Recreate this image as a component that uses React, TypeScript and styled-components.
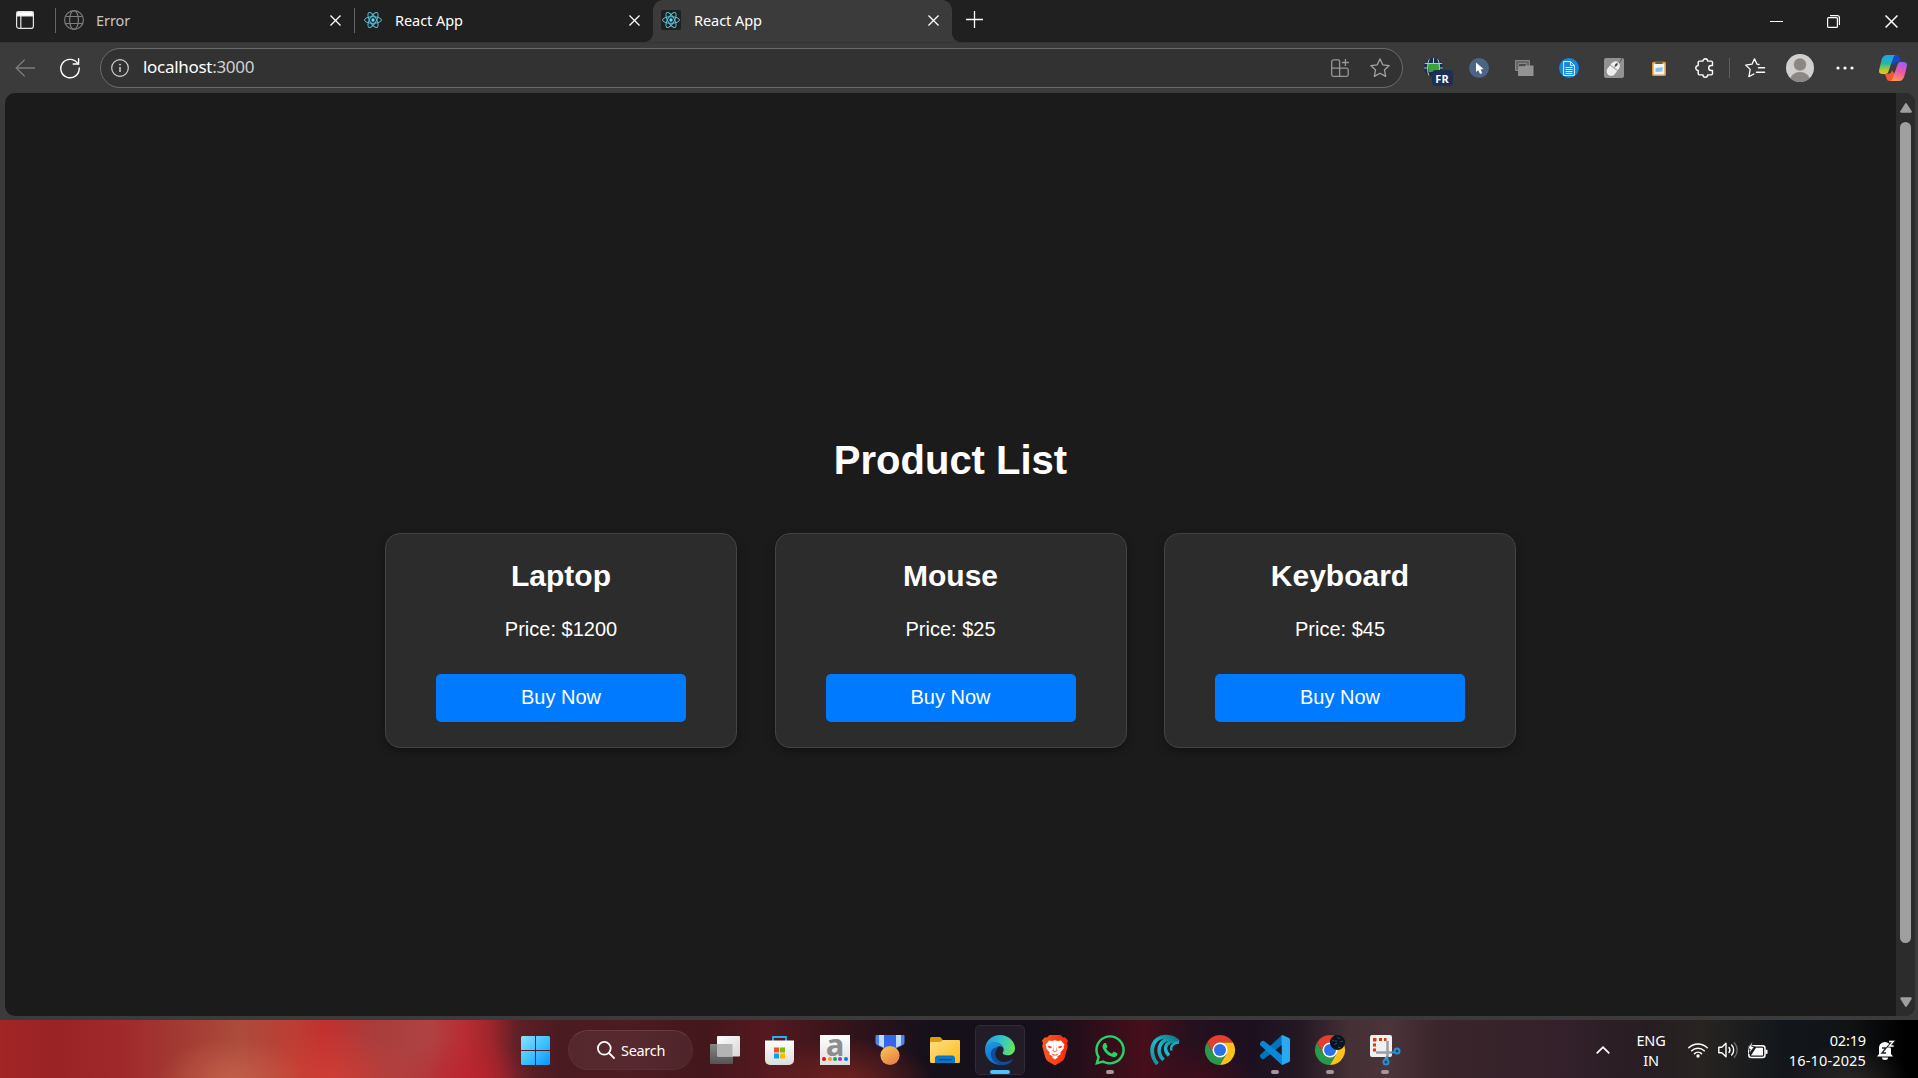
import React from "react";
import styled, { createGlobalStyle } from "styled-components";
import { FaWhatsapp } from "react-icons/fa";

const uiFont = `"Noto Sans", "Open Sans", sans-serif`;

const GlobalStyle = createGlobalStyle`
  * { box-sizing: border-box; }
  body { margin: 0; background: #3b3b3b; overflow: hidden; }
  svg { display: block; flex: none; overflow: visible; }
`;

const Desktop = styled.div`
  display: flex;
  flex-direction: column;
  width: 1918px;
  height: 1078px;
  overflow: hidden;
  background: #3b3b3b;
  color: #fff;
  font-family: ${uiFont};
`;

/* ---------- Tab strip ---------- */

const TabStrip = styled.header`
  display: flex;
  height: 42px;
  background: #202020;
`;

const TabMenu = styled.div`
  display: flex;
  align-items: center;
  justify-content: center;
  width: 50px;
  height: 40px;
  margin-right: 5px;
`;

const Tab = styled.div<{ $active?: boolean; $muted?: boolean; $pad: number }>`
  position: relative;
  display: flex;
  align-items: center;
  width: 299px;
  height: 42px;
  padding: 0 13px 2px ${(p) => p.$pad}px;
  font-size: 14.5px;
  line-height: 20px;
  letter-spacing: -0.05px;
  color: ${(p) => (p.$muted ? "#c4c4c4" : "#fff")};
  background: ${(p) => (p.$active ? "#3b3b3b" : "transparent")};
  border-radius: 10px 10px 0 0;

  &::before,
  &::after {
    content: "";
    display: ${(p) => (p.$active ? "block" : "none")};
    position: absolute;
    bottom: 0;
    width: 9px;
    height: 9px;
  }
  &::before {
    left: -9px;
    background: radial-gradient(circle at 0 0, #202020 8.5px, #3b3b3b 9.5px);
  }
  &::after {
    right: -9px;
    background: radial-gradient(circle at 100% 0, #202020 8.5px, #3b3b3b 9.5px);
  }
`;

const TabDivider = styled.i`
  width: 1px;
  height: 25px;
  margin: 0 8px 0 0;
  background: #666;
`;

const TabIcon = styled.span<{ $dark?: boolean }>`
  display: flex;
  align-items: center;
  justify-content: center;
  width: 20px;
  height: 20px;
  margin-right: ${(p) => (p.$dark ? 13 : 12)}px;
  border-radius: 2px;
  background: ${(p) => (p.$dark ? "#202020" : "transparent")};
`;

const TabTitle = styled.span`
  flex: 1;
`;

const NewTab = styled.div`
  display: flex;
  align-items: center;
  justify-content: center;
  width: 44px;
  height: 39px;
`;

const WindowControls = styled.div`
  display: flex;
  margin: 0 -2px 0 auto;
`;

const WindowButton = styled.div`
  display: flex;
  align-items: center;
  justify-content: center;
  width: 57.6px;
  height: 42px;
`;

/* ---------- Toolbar ---------- */

const Toolbar = styled.nav`
  display: flex;
  align-items: center;
  height: 51px;
  border-top: 1px solid #343434;
`;

const NavButton = styled.div`
  display: flex;
  align-items: center;
  justify-content: center;
  width: 45px;
  height: 45px;
  &:first-child { margin-left: 2px; }
`;

const AddressBar = styled.div`
  display: flex;
  align-items: center;
  width: 1303px;
  height: 40px;
  margin-left: 8px;
  padding: 0 12px 0 10px;
  border: 1px solid #6c6c6c;
  border-radius: 20px;
  background: #323232;
`;

const Address = styled.span`
  flex: 1;
  margin-left: 14px;
  padding-bottom: 2px;
  font-size: 17px;
  line-height: 24px;
  letter-spacing: -0.3px;
  span { color: #d0d0d0; }
`;

const AddressIcon = styled.span`
  display: flex;
  justify-content: center;
  width: 20px;
  & + & { margin-left: 20px; }
`;

const Extensions = styled.div`
  display: flex;
  align-items: center;
  margin-left: 8.5px;
`;

const ToolButton = styled.div`
  position: relative;
  display: flex;
  align-items: center;
  justify-content: center;
  width: 45px;
  height: 45px;
  &:last-child { padding-left: 5px; }
`;

const LanguageBadge = styled.span`
  position: absolute;
  left: 20px;
  top: 24px;
  width: 21px;
  height: 16px;
  border-radius: 4px;
  background: #1d3054;
  font: 700 11px/17px ${uiFont};
  text-align: center;
`;

const RoundTile = styled.span<{ $color: string; $size: number; $square?: boolean }>`
  display: flex;
  align-items: center;
  justify-content: center;
  width: ${(p) => p.$size}px;
  height: ${(p) => p.$size}px;
  overflow: hidden;
  border-radius: ${(p) => (p.$square ? "2px" : "50%")};
  background: ${(p) => p.$color};
`;

const ToolDivider = styled.i`
  width: 1px;
  height: 20px;
  margin: 0 3px 0 2px;
  background: #5f5f5f;
`;

/* ---------- Web page ---------- */

const Viewport = styled.div`
  display: flex;
  height: 923px;
  margin: 0 3px 4px 5px;
  overflow: hidden;
  border-radius: 10px;
  background: #1b1b1b;
`;

const Page = styled.main`
  flex: 1;
  display: flex;
  flex-direction: column;
  align-items: center;
  justify-content: center;
  padding-bottom: 1px;
  font-family: "Liberation Sans", Arial, sans-serif;
`;

const Heading = styled.h1`
  margin: 77px 0 50px;
  font-size: 40px;
  line-height: 46px;
`;

const CardList = styled.section`
  display: flex;
  gap: 37.5px;
`;

const Card = styled.article`
  display: flex;
  flex-direction: column;
  align-items: center;
  width: 352px;
  height: 215px;
  padding: 25px 49px;
  border: 1px solid #444;
  border-radius: 15px;
  background: #2c2c2c;
  box-shadow: 0 4px 10px rgba(0, 0, 0, 0.3);
`;

const ProductName = styled.h2`
  margin: 0 0 25px;
  font-size: 30px;
  line-height: 34px;
`;

const Price = styled.p`
  margin: 0 0 33px;
  font-size: 20px;
  line-height: 23px;
`;

const BuyButton = styled.button`
  width: 250px;
  height: 48px;
  flex: none;
  padding: 0 0 1px;
  border: 0;
  border-radius: 5px;
  background: #007bff;
  color: #fff;
  font: 20px/23px "Liberation Sans", Arial, sans-serif;
`;

const Scrollbar = styled.div`
  display: flex;
  flex-direction: column;
  align-items: center;
  width: 19px;
  padding: 10px 0 9px;
  background: #2c2c2c;
`;

const ScrollThumb = styled.div`
  width: 11px;
  height: 821px;
  margin: 9px 0 auto;
  border-radius: 6px;
  background: #9f9f9f;
`;

/* ---------- Taskbar ---------- */

const Taskbar = styled.footer`
  display: flex;
  align-items: center;
  height: 58px;
  padding: 0 21px 0 510px;
  background:
    radial-gradient(ellipse 75px 45px at 232px 62px, rgba(198, 100, 76, 0.85), transparent),
    radial-gradient(ellipse 90px 50px at 330px 58px, rgba(210, 66, 56, 0.7), transparent),
    radial-gradient(ellipse 70px 45px at 465px 62px, rgba(188, 36, 46, 0.8), transparent),
    radial-gradient(ellipse 90px 45px at 845px 62px, rgba(130, 38, 34, 0.8), transparent),
    radial-gradient(ellipse 60px 40px at 1200px 60px, rgba(74, 12, 26, 0.7), transparent),
    radial-gradient(ellipse 60px 40px at 1850px 62px, rgba(48, 44, 40, 0.8), transparent),
    linear-gradient(90deg, #a32525 0, #992325 60px, #a0292b 120px, #a33a33 180px, #ac4b3c 240px,
      #bd3d33 295px, #c2302f 325px, #a83d3c 375px, #b04243 430px, #b92c33 465px, #9e242b 492px,
      #5f2027 517px, #4a1b21 560px, #4d1b22 630px, #43171c 700px, #551820 770px, #34141a 845px,
      #15101a 930px, #15101b 1040px, #260e19 1080px, #470e1b 1145px, #26101e 1190px, #1c1020 1250px,
      #241823 1300px, #453036 1350px, #4b343a 1390px, #3a252b 1440px, #33202a 1570px, #261d22 1650px,
      #282421 1700px, #13171c 1780px, #101215 1850px, #000 1905px);
`;

const TaskButton = styled.div<{ $active?: boolean }>`
  position: relative;
  display: flex;
  align-items: center;
  justify-content: center;
  width: 50px;
  height: 50px;
  margin-top: 2px;
  border: 1px solid ${(p) => (p.$active ? "#302b36" : "transparent")};
  border-radius: 5px;
  background: ${(p) => (p.$active ? "#211c27" : "transparent")};
`;

const RunningMark = styled.i<{ $active?: boolean }>`
  position: absolute;
  bottom: 0;
  left: 50%;
  width: ${(p) => (p.$active ? 20 : 8)}px;
  height: 4px;
  border-radius: 2px;
  background: ${(p) => (p.$active ? "#4cc2ff" : "#a3969d")};
  transform: translateX(-50%);
`;

const SearchPill = styled.div`
  display: flex;
  align-items: center;
  width: 125px;
  height: 40px;
  margin: 2px 7px 0 8px;
  padding-left: 28px;
  gap: 6px;
  border: 1px solid rgba(255, 255, 255, 0.03);
  border-top-color: rgba(255, 255, 255, 0.1);
  border-radius: 20px;
  background: rgba(255, 255, 255, 0.06);
  font-size: 14.5px;
  letter-spacing: -0.3px;
  line-height: 20px;
`;

const AppRow = styled.div`
  display: flex;
  gap: 5px;
`;

const AmazonTile = styled.span`
  display: flex;
  flex-direction: column;
  align-items: center;
  width: 30px;
  height: 30px;
  background: linear-gradient(#fff, #dedede);
  color: #8d8d8d;
  font: 700 31px/19px "Noto Sans", sans-serif;
`;

const DotRow = styled.span`
  display: flex;
  gap: 1.4px;
  margin-top: 3px;
`;

const Dot = styled.i<{ $color: string }>`
  width: 4px;
  height: 4px;
  border-radius: 50%;
  background: ${(p) => p.$color};
`;

const Tray = styled.div`
  display: flex;
  align-items: center;
  height: 58px;
  margin-left: auto;
  padding-top: 2px;
  font-size: 14.5px;
  line-height: 20px;
`;

const TrayItem = styled.div<{ $width: number }>`
  display: flex;
  align-items: center;
  justify-content: center;
  width: ${(p) => p.$width}px;
  text-align: center;
`;

const Language = styled.div`
  width: 60px;
  padding-right: 4px;
  text-align: center;
  letter-spacing: -0.2px;
`;

const Clock = styled.div`
  display: flex;
  flex-direction: column;
  align-items: flex-end;
  width: 93px;
  margin-right: 7px;
  white-space: nowrap;
`;

const ClockTime = styled.span`
  letter-spacing: -0.15px;
`;

const ClockDate = styled.span`
  letter-spacing: 0.15px;
`;

/* ---------- Icons ---------- */

const CloseIcon = ({ size = 11, color = "#fff" }: { size?: number; color?: string }) => (
  <svg width={size} height={size} viewBox="0 0 12 12" stroke={color} strokeWidth="1.4" fill="none">
    <path d="M.5.5l11 11M11.5.5l-11 11" />
  </svg>
);

const TabMenuIcon = () => (
  <svg width="18" height="18" viewBox="0 0 18 18" fill="none" stroke="#e4e4e4" strokeWidth="1.2">
    <rect x=".6" y=".6" width="16.8" height="16.8" rx="2.5" />
    <path d="M1 1h16v4H1z" fill="#fff" />
    <path d="M4.8 5v12" />
  </svg>
);

const GlobeIcon = () => (
  <svg width="20" height="20" viewBox="0 0 20 20" fill="none" stroke="#7d7d7d" strokeWidth="1.2">
    <circle cx="10" cy="10" r="9.4" />
    <ellipse cx="10" cy="10" rx="4.4" ry="9.4" />
    <path d="M1.5 6.5h17M1.5 13.5h17" />
  </svg>
);

const ReactIcon = () => (
  <svg width="18" height="18" viewBox="-12 -12 24 24" fill="none" stroke="#58c4dc" strokeWidth="1.3">
    <circle r="2.2" fill="#61dafb" stroke="none" />
    <ellipse rx="11.3" ry="4.4" />
    <ellipse rx="11.3" ry="4.4" transform="rotate(60)" />
    <ellipse rx="11.3" ry="4.4" transform="rotate(120)" />
  </svg>
);

const BackIcon = () => (
  <svg width="20" height="18" viewBox="0 0 20 18" fill="none" stroke="#7c7c7c" strokeWidth="1.3">
    <path d="M9.6.7L1.2 9l8.4 8.3M1.2 9H20" />
  </svg>
);

const ReloadIcon = () => (
  <svg width="20" height="20" viewBox="0 0 20 20" fill="none" stroke="#fff" strokeWidth="1.4" strokeLinecap="round">
    <path d="M18 6A9.2 9.2 0 1 0 19.2 10" />
    <path d="M18.6.8V6H13.2" />
  </svg>
);

const InfoIcon = () => (
  <svg width="18" height="18" viewBox="0 0 18 18" fill="none" stroke="#d2d2d2" strokeWidth="1.2">
    <circle cx="9" cy="9" r="8.3" />
    <path d="M9 8v5" strokeWidth="1.5" />
    <circle cx="9" cy="5.6" r=".95" fill="#d2d2d2" stroke="none" />
  </svg>
);

const AddAppIcon = () => (
  <svg width="18" height="18" viewBox="0 0 18 18" fill="none" stroke="#979797" strokeWidth="1.3">
    <path d="M8.6 17.3H2.2A1.6 1.6 0 0 1 .7 15.7V2.5A1.6 1.6 0 0 1 2.2.9h5a1.4 1.4 0 0 1 1.4 1.4v15zM.7 9.1h15A1.6 1.6 0 0 1 17.2 10.7v5a1.6 1.6 0 0 1-1.5 1.6H8.6" />
    <path d="M14.4 0v7M10.9 3.5h7" />
  </svg>
);

const StarIcon = () => (
  <svg width="20" height="20" viewBox="0 0 20 20" fill="none" stroke="#a3a3a3" strokeWidth="1.3" strokeLinejoin="round">
    <path d="M10 .9l2.75 5.9 6.45.8-4.75 4.4 1.25 6.4L10 15.2l-5.7 3.2 1.25-6.4L.8 7.6l6.45-.8z" />
  </svg>
);

const TranslateIcon = () => (
  <svg width="20" height="20" viewBox="0 0 20 20">
    <defs>
      <clipPath id="globeClip"><circle cx="9.500" cy="9.500" r="9.500" /></clipPath>
    </defs>
    <g clipPath="url(#globeClip)">
      <path d="M0 0h20v20H0z" fill="#182e50" />
      <path d="M3.500 6h12.500v8H5z" fill="#37a53c" />
      <path d="M9.500 0v6M0 5.500h20M0 10h4M16 10h4M5.500 0Q1.500 9.500 5.500 20M13.500 0q4 9.500 0 20" stroke="#b9c5c8" strokeWidth="1" fill="none" />
    </g>
  </svg>
);

const PointerIcon = () => (
  <svg width="9" height="13" viewBox="0 0 9 13">
    <path d="M1 .5v9.6l2.3-1.9 1.8 3.9 2.2-1-1.8-3.7 3-.4z" fill="#fff" />
  </svg>
);

const WindowsStackIcon = () => (
  <svg width="20" height="18" viewBox="0 0 20 18">
    <path d="M1.500 1.500h14v10h-14z" fill="#666" stroke="#878787" />
    <path d="M4.500 4.500h8v3h-8z" fill="#4c4c4c" stroke="#878787" />
    <path d="M4 8h7V6.500h8.500V17H4z" fill="#929292" />
  </svg>
);

const DocumentIcon = () => (
  <svg width="12" height="15" viewBox="0 0 12 15" fill="none" stroke="#d9f0ff" strokeWidth="1">
    <path d="M.6.6h7l3.800 3.800V14.400H.6zM7.600.6v3.800h3.800M2.500 6.500h7M2.500 8.500h7M2.500 10.500h7M2.500 12.400h7" />
  </svg>
);

const MouseIcon = () => (
  <svg width="20" height="20" viewBox="0 0 20 20">
    <path d="M13 7Q16 5.500 18 0" stroke="#555" fill="none" />
    <g transform="rotate(38 9 11)">
      <rect x="4.500" y="2.500" width="9" height="16" rx="4.500" fill="#eee" />
      <path d="M4.500 9.500h9M9 2.500v7" stroke="#a0a0a0" />
      <rect x="8" y="4" width="2" height="3.500" rx="1" fill="#444" />
    </g>
  </svg>
);

const ClipboardIcon = () => (
  <svg width="14" height="15" viewBox="0 0 14 15">
    <rect x=".8" y="1.600" width="12.400" height="12.600" rx=".6" fill="#f2f5f8" stroke="#e0962f" strokeWidth="1.600" />
    <path d="M4 0h6l.8 3H3.200z" fill="#5a6040" />
    <path d="M3.500 7.200l7-1.200v4.500l-7 .5z" fill="#8ebfea" />
  </svg>
);

const PuzzleIcon = () => (
  <svg width="19" height="20" viewBox="0 0 19 20" fill="none" stroke="#fff" strokeWidth="1.400" strokeLinejoin="round">
    <path d="M4.500 3.100H8a2.300 2.300 0 0 1 4.600 0h3.600a1.300 1.300 0 0 1 1.300 1.300v3.100h-1.300a2.500 2.500 0 0 0 0 5h1.300v3.100a1.300 1.300 0 0 1-1.300 1.300h-3.600a2.300 2.300 0 0 1-4.600 0H4.500a1.300 1.300 0 0 1-1.300-1.300v-3.200a2.400 2.400 0 0 1 0-4.800V4.400a1.300 1.300 0 0 1 1.300-1.300z" />
  </svg>
);

const FavoritesIcon = () => (
  <svg width="20" height="20" viewBox="0 0 20 20" fill="none" stroke="#fff" strokeWidth="1.300" strokeLinejoin="round" strokeLinecap="round">
    <path d="M14 6.500l-1.900-.3L9.500.9 7 6.200l-6.300.9 4.500 4.300-1.300 7.200 5-2.600" />
    <path d="M13.500 9.700h6M11.500 14.200h8M12.500 5.900" strokeWidth="1.500" />
  </svg>
);

const AvatarIcon = () => (
  <svg width="28" height="28" viewBox="0 0 28 28">
    <circle cx="14" cy="10.500" r="6.200" fill="#8b8785" />
    <ellipse cx="14" cy="26.500" rx="10" ry="8.400" fill="#8b8785" />
  </svg>
);

const MoreIcon = () => (
  <svg width="18" height="4" viewBox="0 0 18 4" fill="#fff">
    <circle cx="2" cy="2" r="1.600" />
    <circle cx="9" cy="2" r="1.600" />
    <circle cx="16" cy="2" r="1.600" />
  </svg>
);

const CopilotIcon = () => (
  <svg width="28" height="26" viewBox="0 0 28 26">
    <defs>
      <linearGradient id="copA" x1="0" y1="0" x2="0" y2="1">
        <stop offset="0" stopColor="#1ba5ee" />
        <stop offset=".45" stopColor="#2bb5a4" />
        <stop offset=".75" stopColor="#a6c833" />
        <stop offset="1" stopColor="#f0c419" />
      </linearGradient>
      <linearGradient id="copB" x1=".6" y1="0" x2=".3" y2="1">
        <stop offset="0" stopColor="#a45df0" />
        <stop offset=".5" stopColor="#ee5aa1" />
        <stop offset="1" stopColor="#fb9855" />
      </linearGradient>
    </defs>
    <path d="M14 0h3.500c2.200 0 2.700 1.500 3.500 4.300.6 2 1.300 2.900 3 2.900h-5.500c-2 0-2.800 1.400-3.400 3.500L12 7z" fill="#1746c7" />
    <path d="M14 26h-3.500c-2.200 0-2.700-1.500-3.500-4.300-.6-2-1.300-2.900-3-2.900h5.500c2 0 2.800-1.400 3.400-3.500L16 19z" fill="#ee5a35" />
    <path d="M16.500 0H7.700C4.500 0 3 3 2 7.200 1 11 0 14.800 0 16.200 0 18 1.400 19 3.500 19H6c2.400 0 3.300-1.600 3.900-3.800L13.800 4c.7-2.200 1.500-3.700 2.700-4z" fill="url(#copA)" />
    <path d="M11.500 26h8.800c3.200 0 4.700-3 5.700-7.200 1-3.800 2-7.600 2-9C28 8 26.600 7 24.500 7H22c-2.400 0-3.300 1.600-3.900 3.800L14.200 22c-.7 2.200-1.500 3.700-2.700 4z" fill="url(#copB)" />
  </svg>
);

const WindowsLogo = () => (
  <svg width="29" height="29" viewBox="0 0 29 29">
    <defs>
      <linearGradient id="win" gradientUnits="userSpaceOnUse" x1="0" y1="0" x2="29" y2="29">
        <stop offset="0" stopColor="#8be0ff" />
        <stop offset=".5" stopColor="#42c3ff" />
        <stop offset="1" stopColor="#0895ff" />
      </linearGradient>
    </defs>
    <path d="M1 0h13v14H0V1zM15 0h13l1 1v13H15zM0 15h14v14H1l-1-1zM15 15h14v13l-1 1H15z" fill="url(#win)" />
  </svg>
);

const SearchIcon = () => (
  <svg width="18" height="18" viewBox="0 0 18 18" fill="none" stroke="#fff" strokeWidth="1.800" strokeLinecap="round">
    <circle cx="7.300" cy="7.300" r="6.400" />
    <path d="M12 12l5 5" />
  </svg>
);

const TaskViewIcon = () => (
  <svg width="30" height="28" viewBox="0 0 30 28">
    <defs>
      <linearGradient id="tv" x1="0" y1="0" x2="1" y2="1">
        <stop offset="0" stopColor="#fff" />
        <stop offset="1" stopColor="#d6d6d6" />
      </linearGradient>
      <linearGradient id="tvb" x1="0" y1="0" x2="0" y2="1">
        <stop offset="0" stopColor="#858585" />
        <stop offset="1" stopColor="#555" />
      </linearGradient>
    </defs>
    <rect y="8" width="23" height="20" rx="1" fill="url(#tvb)" />
    <rect x="7" width="23" height="20.500" rx="1" fill="url(#tv)" />
    <path d="M7 8h15.500v12.500H8a1 1 0 0 1-1-1z" fill="#b4b4b4" />
  </svg>
);

const StoreIcon = () => (
  <svg width="30" height="29" viewBox="0 0 30 29">
    <defs>
      <linearGradient id="store" x1="0" y1="0" x2="0" y2="1">
        <stop offset="0" stopColor="#fff" />
        <stop offset="1" stopColor="#dcdcdc" />
      </linearGradient>
    </defs>
    <path d="M8 6V1h13v5" fill="none" stroke="#22b1ee" strokeWidth="1.800" />
    <path d="M0 4.500h29V24a5 5 0 0 1-5 5H5a5 5 0 0 1-5-5z" fill="url(#store)" />
    <path d="M9 11.500h5v5H9z" fill="#f25022" />
    <path d="M15 11.500h5v5h-5z" fill="#7fba00" />
    <path d="M9 17.500h5v5H9z" fill="#00a4ef" />
    <path d="M15 17.500h5v5h-5z" fill="#ffb900" />
  </svg>
);

const MedalIcon = () => (
  <svg width="30" height="30" viewBox="0 0 30 30">
    <defs>
      <linearGradient id="medal" x1="0" y1="0" x2=".6" y2="1">
        <stop offset="0" stopColor="#fcc954" />
        <stop offset="1" stopColor="#e5824b" />
      </linearGradient>
    </defs>
    <path d="M1.500 0h27a1 1 0 0 1 1 1v6.500a3 3 0 0 1-1.500 2.600L20 14H10L2 10.100A3 3 0 0 1 .5 7.500V1a1 1 0 0 1 1-1z" fill="#4c86ef" />
    <path d="M8.500 0h13v12.500h-13z" fill="#3567ed" />
    <path d="M4 0h5v12.500l-5-2.200zM21 0h5v10.300l-5 2.200z" fill="#c0d9fb" />
    <circle cx="15" cy="20.500" r="9.600" fill="url(#medal)" />
  </svg>
);

const FolderIcon = () => (
  <svg width="30" height="27" viewBox="0 0 30 27">
    <defs>
      <linearGradient id="folder" x1="0" y1="0" x2="1" y2="1">
        <stop offset="0" stopColor="#ffe08a" />
        <stop offset="1" stopColor="#fdba12" />
      </linearGradient>
    </defs>
    <path d="M1.500 0h7.800c1 0 1.700.5 2.300 1.500L13.500 4v4H0V1.500A1.500 1.500 0 0 1 1.500 0z" fill="#dba008" />
    <path d="M0 6q0-1 1-1h9q1 0 1.500-.8.700-1.200 2-1.200H29q1 0 1 1v20.500a1.500 1.500 0 0 1-1.500 1.500h-27A1.500 1.500 0 0 1 0 24.500z" fill="url(#folder)" />
    <path d="M5 26v-4.500a3 3 0 0 1 3-3h14a3 3 0 0 1 3 3V26z" fill="#0877c9" />
    <path d="M8.500 22.700h13" stroke="#084b86" strokeWidth="1.300" />
  </svg>
);

const EdgeIcon = () => (
  <svg width="30" height="30" viewBox="0 0 256 256">
    <defs>
      <linearGradient id="edgeTop" x1="0" y1=".4" x2="1" y2=".6">
        <stop offset="0" stopColor="#229fe2" />
        <stop offset=".45" stopColor="#31bfd2" />
        <stop offset=".8" stopColor="#4ed88c" />
        <stop offset="1" stopColor="#70e949" />
      </linearGradient>
      <linearGradient id="edgeLeft" x1=".3" y1="0" x2=".6" y2="1">
        <stop offset="0" stopColor="#1f94df" />
        <stop offset="1" stopColor="#0a70d0" />
      </linearGradient>
    </defs>
    <path d="M0 120C4 52 59 0 128 0c77 0 128 58 128 112 0 36-27 60-62 60-27 0-44-10-44-18 0-6 9-11 9-29 0-30-31-61-78-61-43 0-74 26-81 56z" fill="url(#edgeTop)" />
    <path d="M0 126c2-40 36-66 75-66 50 0 84 34 84 62 0-11-13-26-32-26-24 0-49 28-49 65 0 47 33 88 70 92-83 12-148-52-148-127z" fill="url(#edgeLeft)" />
    <path d="M113 108c-19 14-29 38-23 66 8 39 42 57 76 57 29 0 51-11 66-24 5-4 9-1 6 4-18 29-51 45-87 45-57 0-102-44-102-94 0-36 29-65 64-54z" fill="#104d9c" />
  </svg>
);

const BraveIcon = () => (
  <svg width="26" height="30" viewBox="0 0 26 30">
    <defs>
      <linearGradient id="brave" x1="0" y1="0" x2="1" y2="0">
        <stop offset="0" stopColor="#fb5a22" />
        <stop offset="1" stopColor="#f6290c" />
      </linearGradient>
    </defs>
    <path d="M7.500 0h11l2.600 2.600 2-.4L26 5.500l-1 3 .8 2.500-3 11.300q-.8 2.600-3 4.200L14.500 29.500q-1.500 1-3 0L6.200 26.500q-2.200-1.600-3-4.200L.2 11 1 8.500l-1-3 2.900-3.300 2 .4z" fill="url(#brave)" />
    <path d="M7 5.500l3 .6 3-.8 3 .8 3-.6 3.500 4.300-.9 1.600.3 1.800-3.600 4.300.4 2-3 1.500-1.200-.8 1.500 2-3 2.400-3-2.400 1.500-2-1.200.8-3-1.500.4-2-3.600-4.300.3-1.800-.9-1.600z" fill="#fff" />
    <path d="M5.500 10.500l4.500 1.300-.8 1.500-2.400-.4zM20.500 10.500L16 11.800l.8 1.500 2.400-.4zM11 7.500l.8 5-1.300 3.300 2.500 1.500 2.500-1.500-1.300-3.300.8-5-1 5.300.8 2.500-1.800 1.200-1.800-1.200.8-2.500zM9 18.500l4 1.200 4-1.200-2.500 2h-3z" fill="#f9431a" />
  </svg>
);

const WaveIcon = () => (
  <svg width="30" height="30" viewBox="0 0 30 30" fill="none" strokeLinecap="butt">
    <defs>
      <linearGradient id="wave" gradientUnits="userSpaceOnUse" x1="28" y1="0" x2="4" y2="30">
        <stop offset="0" stopColor="#0b6c7b" />
        <stop offset=".5" stopColor="#16bfd0" />
        <stop offset="1" stopColor="#138c9c" />
      </linearGradient>
    </defs>
    <path d="M28.500 7C22-1 8 0 3.500 9 .8 15 2 23 7.500 29" stroke="url(#wave)" strokeWidth="3.800" />
    <path d="M28 6.500C22 1 12 4 9.500 12c-1.300 5 0 9 4 13" stroke="url(#wave)" strokeWidth="3.600" />
    <path d="M28 7C22 4.500 16 8 15.500 13c-.2 3 .8 5 3.500 7.500" stroke="url(#wave)" strokeWidth="3.300" />
    <path d="M29 7.500c-5 0-9 3-7.500 8" stroke="#1baebc" strokeWidth="2.500" />
  </svg>
);

const ChromeIcon = ({ badge }: { badge?: boolean }) => (
  <svg width="30" height="30" viewBox="0 0 30 30">
    <path d="M15 0A15 15 0 0 1 28 7.500H15L8.500 18.700 2 7.500A15 15 0 0 1 15 0z" fill="#e33e2f" />
    <path d="M2 7.500L8.500 18.750 15 22.500 15 30A15 15 0 0 1 2 7.500z" fill="#28994a" />
    <path d="M8.500 18.700L15 15l6.500 3.750L15 30A15 15 0 0 1 9 28z" fill="#28994a" />
    <path d="M15 7.500h13A15 15 0 0 1 15 30l6.500-11.250z" fill="#fcc21b" />
    <circle cx="15" cy="15" r="7.500" fill="#fff" />
    <circle cx="15" cy="15" r="6" fill="#2871e8" />
    {badge && (
      <g>
        <circle cx="22.500" cy="7.500" r="7.600" fill="#0b1320" />
        <path d="M17 5l2 1M22 2l3 2M25 7l3-1M19 10l3-2M23 12l3 1M21 5v2" stroke="#27506c" />
      </g>
    )}
  </svg>
);

const VsCodeIcon = () => (
  <svg width="30" height="30" viewBox="0 0 30 30">
    <path d="M22 0L0 20v2l2 2q1 .6 2 0L23 9z" fill="#0073bd" />
    <path d="M22 30L0 10V8l2-2q1-.6 2 0l19 15z" fill="#0a87d6" />
    <path d="M21.500.5Q22 0 23 .2l6 2.800q1 .5 1 1.500v21q0 1-1 1.500l-6 2.800q-1 .2-1.500-.3L22 29z" fill="#2aa9f1" />
  </svg>
);

const SnipIcon = () => (
  <svg width="30" height="30" viewBox="0 0 30 30">
    <rect width="22" height="22" rx="2" fill="#f1f1f1" />
    <path d="M4.500 6.500v-2h2M9 4.500h3M14 4.500h2.500M4.500 8.500v3M4.500 13.500v3" stroke="#d83b01" strokeWidth="3" fill="none" />
    <path d="M17.500 6v15l-2 3M6 17.500h16" stroke="#9b9fa3" strokeWidth="2.500" fill="none" />
    <g fill="none" stroke="#1c95e3" strokeWidth="2">
      <circle cx="27" cy="16" r="2.500" />
      <circle cx="16" cy="27" r="2.500" />
      <path d="M24.500 17l-3 .8M17 24.500l.7-3" />
    </g>
  </svg>
);

const ChevronIcon = () => (
  <svg width="14" height="8" viewBox="0 0 14 8" fill="none" stroke="#fff" strokeWidth="1.800">
    <path d="M.7 7.300L7 1.200l6.300 6.100" />
  </svg>
);

const WifiIcon = () => (
  <svg width="20" height="16" viewBox="0 0 20 16" fill="none" stroke="#fff" strokeWidth="1.500" strokeLinecap="round">
    <path d="M.8 5.800a13 13 0 0 1 18.400 0M3.700 8.800a9 9 0 0 1 12.600 0M6.500 11.600a5 5 0 0 1 7 0" />
    <circle cx="10" cy="14" r="1.700" fill="#fff" stroke="none" />
  </svg>
);

const VolumeIcon = () => (
  <svg width="20" height="18" viewBox="0 0 20 18" fill="none" stroke="#fff" strokeWidth="1.400" strokeLinejoin="round" strokeLinecap="round">
    <path d="M.8 6.200h3L8 2.300v13.400l-4.200-3.900h-3zM11 6.500a4 4 0 0 1 0 5M13.700 4a7.400 7.400 0 0 1 0 10" />
    <path d="M16.400 1.700a11 11 0 0 1 0 14.600" stroke="#6a6a6c" />
  </svg>
);

const BatteryIcon = () => (
  <svg width="20" height="17" viewBox="0 0 20 17">
    <rect x=".8" y="3.800" width="16.200" height="11.700" rx="2.500" fill="none" stroke="#fff" strokeWidth="1.500" />
    <path d="M3 13.500l5-7.700h7V13.500z" fill="#fff" />
    <path d="M17.500 7.800h2v4h-2z" fill="#fff" />
    <path d="M4.500-1L-.5 7h2.700L1 12l5.500-7.500H3.800z" fill="#fff" stroke="#15181b" strokeWidth=".8" />
  </svg>
);

const BellIcon = () => (
  <svg width="17" height="19" viewBox="0 0 17 19">
    <path d="M2 13V7a6 6 0 0 1 10-4.500L14 8v5l2 2.500H0z" fill="#fff" />
    <path d="M5 16.500h6a3 2.500 0 0 1-6 0z" fill="#fff" />
    <path d="M5 7h4l-4 5h4" fill="none" stroke="#202225" strokeWidth="1.400" />
    <path d="M12 .5h4.300L12.300 5h4.300" fill="none" stroke="#17191c" strokeWidth="3" />
    <path d="M12 .5h4.300L12.300 5h4.300" fill="none" stroke="#fff" strokeWidth="1.300" />
  </svg>
);

/* ---------- Data ---------- */

const products = [
  { name: "Laptop", price: 1200 },
  { name: "Mouse", price: 25 },
  { name: "Keyboard", price: 45 },
];

const AmazonIcon = () => (
  <AmazonTile>
    a
    <DotRow>
      {["#f00a0a", "#f59a23", "#0daa5c", "#8d39c7", "#087fe0"].map((c) => (
        <Dot key={c} $color={c} />
      ))}
    </DotRow>
  </AmazonTile>
);

const apps: { id: string; icon: React.ReactNode; running?: boolean; active?: boolean }[] = [
  { id: "taskview", icon: <TaskViewIcon /> },
  { id: "store", icon: <StoreIcon /> },
  { id: "amazon", icon: <AmazonIcon /> },
  { id: "medal", icon: <MedalIcon /> },
  { id: "explorer", icon: <FolderIcon /> },
  { id: "edge", icon: <EdgeIcon />, running: true, active: true },
  { id: "brave", icon: <BraveIcon /> },
  { id: "whatsapp", icon: <FaWhatsapp size={34} color="#25d366" />, running: true },
  { id: "wave", icon: <WaveIcon /> },
  { id: "chrome", icon: <ChromeIcon /> },
  { id: "vscode", icon: <VsCodeIcon />, running: true },
  { id: "chrome-profile", icon: <ChromeIcon badge />, running: true },
  { id: "snip", icon: <SnipIcon />, running: true },
];

export default function App() {
  return (
    <Desktop>
      <GlobalStyle />
      <TabStrip>
        <TabMenu><TabMenuIcon /></TabMenu>
        <Tab $pad={0} $muted>
          <TabDivider />
          <TabIcon><GlobeIcon /></TabIcon>
          <TabTitle>Error</TabTitle>
          <CloseIcon />
        </Tab>
        <Tab $pad={0}>
          <TabDivider />
          <TabIcon><ReactIcon /></TabIcon>
          <TabTitle>React App</TabTitle>
          <CloseIcon />
        </Tab>
        <Tab $pad={8} $active>
          <TabIcon $dark><ReactIcon /></TabIcon>
          <TabTitle>React App</TabTitle>
          <CloseIcon />
        </Tab>
        <NewTab>
          <svg width="17" height="17" viewBox="0 0 17 17" stroke="#fff" strokeWidth="1.300">
            <path d="M8.500 0v17M0 8.500h17" />
          </svg>
        </NewTab>
        <WindowControls>
          <WindowButton>
            <svg width="13" height="1" viewBox="0 0 13 1"><path d="M0 0h13v1H0z" fill="#fff" /></svg>
          </WindowButton>
          <WindowButton>
            <svg width="13" height="13" viewBox="0 0 13 13" fill="none" stroke="#fff" strokeWidth="1.200">
              <rect x=".6" y="2.600" width="9.800" height="9.800" rx="1" />
              <path d="M3 .6h7.400a2 2 0 0 1 2 2V10" />
            </svg>
          </WindowButton>
          <WindowButton><CloseIcon size={13} /></WindowButton>
        </WindowControls>
      </TabStrip>

      <Toolbar>
        <NavButton><BackIcon /></NavButton>
        <NavButton><ReloadIcon /></NavButton>
        <AddressBar>
          <InfoIcon />
          <Address>localhost<span>:3000</span></Address>
          <AddressIcon><AddAppIcon /></AddressIcon>
          <AddressIcon><StarIcon /></AddressIcon>
        </AddressBar>
        <Extensions>
          <ToolButton>
            <TranslateIcon />
            <LanguageBadge>FR</LanguageBadge>
          </ToolButton>
          <ToolButton><RoundTile $size={20} $color="#4b6585"><PointerIcon /></RoundTile></ToolButton>
          <ToolButton><WindowsStackIcon /></ToolButton>
          <ToolButton><RoundTile $size={20} $color="#1787dc"><DocumentIcon /></RoundTile></ToolButton>
          <ToolButton><RoundTile $size={20} $color="#929292" $square><MouseIcon /></RoundTile></ToolButton>
          <ToolButton><ClipboardIcon /></ToolButton>
          <ToolButton><PuzzleIcon /></ToolButton>
          <ToolDivider />
          <ToolButton><FavoritesIcon /></ToolButton>
          <ToolButton><RoundTile $size={28} $color="#d2d0ce"><AvatarIcon /></RoundTile></ToolButton>
          <ToolButton><MoreIcon /></ToolButton>
          <ToolButton><CopilotIcon /></ToolButton>
        </Extensions>
      </Toolbar>

      <Viewport>
        <Page>
          <Heading>Product List</Heading>
          <CardList>
            {products.map((p) => (
              <Card key={p.name}>
                <ProductName>{p.name}</ProductName>
                <Price>Price: ${p.price}</Price>
                <BuyButton>Buy Now</BuyButton>
              </Card>
            ))}
          </CardList>
        </Page>
        <Scrollbar>
          <svg width="12" height="10" viewBox="0 0 12 10"><path d="M5 .7q1-1.200 2 0l4.700 7.500q.5 1.500-1 1.500H1.300q-1.500 0-1-1.500z" fill="#9f9f9f" /></svg>
          <ScrollThumb />
          <svg width="12" height="10" viewBox="0 0 12 10"><path d="M5 9.300q1 1.200 2 0l4.700-7.500q.5-1.500-1-1.500H1.300q-1.500 0-1 1.500z" fill="#9f9f9f" /></svg>
        </Scrollbar>
      </Viewport>

      <Taskbar>
        <TaskButton><WindowsLogo /></TaskButton>
        <SearchPill><SearchIcon />Search</SearchPill>
        <AppRow>
          {apps.map((a) => (
            <TaskButton key={a.id} $active={a.active}>
              {a.icon}
              {a.running && <RunningMark $active={a.active} />}
            </TaskButton>
          ))}
        </AppRow>
        <Tray>
          <TrayItem $width={40}><ChevronIcon /></TrayItem>
          <Language>ENG<br />IN</Language>
          <TrayItem $width={30}><WifiIcon /></TrayItem>
          <TrayItem $width={30}><VolumeIcon /></TrayItem>
          <TrayItem $width={30}><BatteryIcon /></TrayItem>
          <Clock>
            <ClockTime>02:19</ClockTime>
            <ClockDate>16-10-2025</ClockDate>
          </Clock>
          <TrayItem $width={24}><BellIcon /></TrayItem>
        </Tray>
      </Taskbar>
    </Desktop>
  );
}
